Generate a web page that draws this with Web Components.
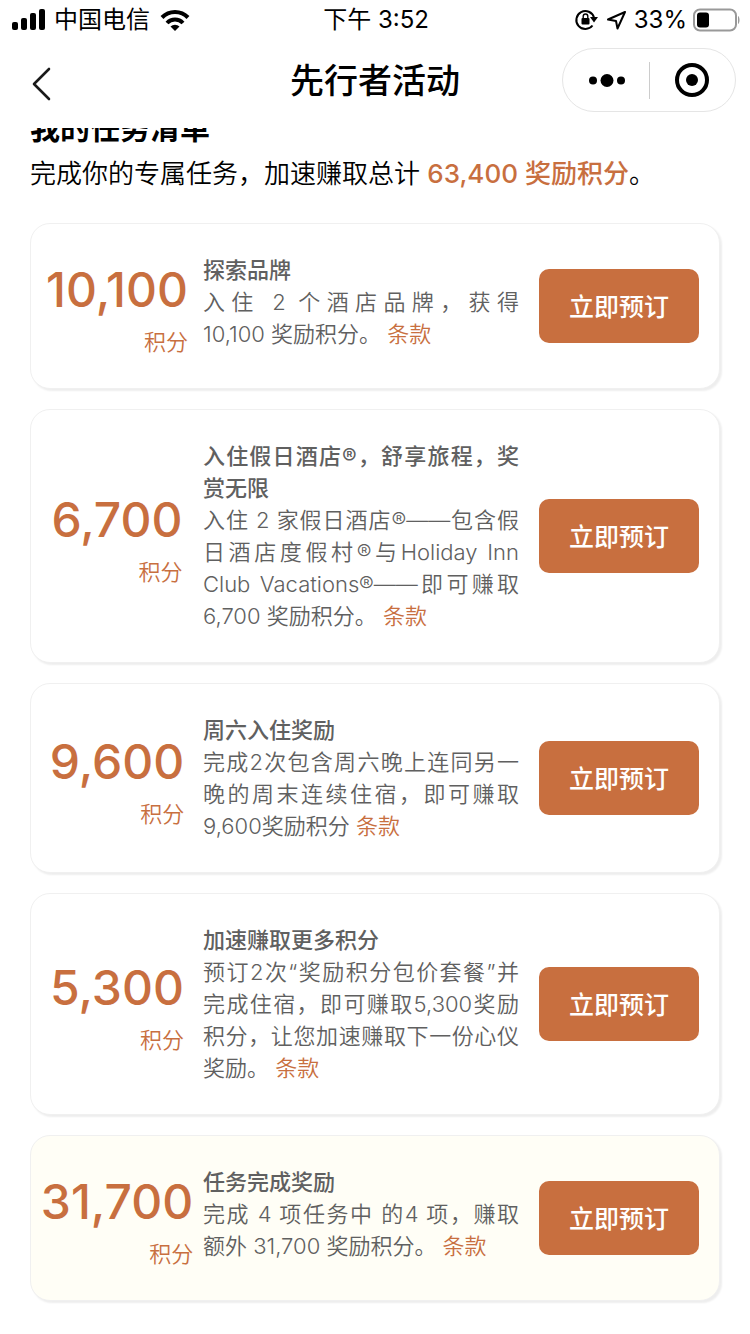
<!DOCTYPE html>
<html lang="zh-CN">
<head>
<meta charset="utf-8">
<meta name="viewport" content="width=device-width, initial-scale=1">
<title>先行者活动</title>
<style>
    :root {
        --accent: #c86f3f;
        --text: #606060;
    }

    body {
        margin: 0;
        background: #fff;
        color: #000;
        font-family: Inter, "Noto Sans CJK SC", sans-serif;
    }
</style>
</head>
<body>
<status-bar carrier="中国电信" time="下午 3:52" battery="33"></status-bar>
<nav-bar>先行者活动</nav-bar>
<task-list>
    <span slot="title">我的任务清单</span>
    <span slot="intro">完成你的专属任务，加速赚取总计 <mark-points>63,400 奖励积分</mark-points>。</span>
    <task-card points="10,100"><span slot="title">探索品牌</span>入住 2 个酒店品牌，获得 10,100&nbsp;奖励积分。 <a href="#terms">条款</a></task-card>
    <task-card points="6,700"><span slot="title">入住假日酒店®，舒享旅程，奖赏无限</span>入住 2 家假日酒店®——包含假日酒店度假村®与Holiday Inn Club Vacations®——即可赚取 6,700 奖励积分。 <a href="#terms">条款</a></task-card>
    <task-card points="9,600"><span slot="title">周六入住奖励</span>完成2次包含周六晚上连同另一晚的周末连续住宿，即可赚取9,600奖励积分 <a href="#terms">条款</a></task-card>
    <task-card points="5,300"><span slot="title">加速赚取更多积分</span>预订2次“奖励积分包价套餐”并完成住宿，即可赚取5,300奖励积分，让您加速赚取下一份心仪奖励。 <a href="#terms">条款</a></task-card>
    <task-card points="31,700" highlight><span slot="title">任务完成奖励</span>完成 4 项任务中 的4 项，赚取额外 31,700 奖励积分。 <a href="#terms">条款</a></task-card>
</task-list>

<script>
class StatusBar extends HTMLElement {
    constructor() {
        super();
        this.attachShadow({ mode: "open" });
    }

    connectedCallback() {
        const battery = this.getAttribute("battery");
        this.shadowRoot.innerHTML = `
            <style>
                :host {
                    display: grid;
                    grid-template-columns: 1fr auto 1fr;
                    align-items: center;
                    height: 40px;
                    padding: 0 10px 0 12px;
                    font-size: 24px;
                    line-height: 40px;
                }

                div {
                    display: flex;
                    align-items: center;
                    gap: 8px;
                }

                .right {
                    justify-content: flex-end;
                    gap: 5px;
                }

                svg {
                    flex: none;
                }
            </style>

            <div>
                <svg width="34" height="22" viewBox="0 0 34 22">
                    <rect x="0" y="13" width="6" height="8" rx="2"/>
                    <rect x="9" y="9" width="6" height="12" rx="2"/>
                    <rect x="18" y="4" width="6" height="17" rx="2"/>
                    <rect x="27" y="0" width="6" height="21" rx="2"/>
                </svg>
                <span>${this.getAttribute("carrier")}</span>
                <svg width="34" height="24" viewBox="0 0 34 24">
                    <path d="M4 9.500a18 18 0 0 1 26 0M9 15a11 11 0 0 1 16 0" fill="none" stroke="#000" stroke-width="4"/>
                    <path d="M17 23l-4.500-4.500a6.500 6.500 0 0 1 9 0z"/>
                </svg>
            </div>
            <span>${this.getAttribute("time")}</span>
            <div class="right">
                <svg width="26" height="24" viewBox="0 0 26 24">
                    <path d="M18.500 17.500a9 9 0 1 1 1.500-8" fill="none" stroke="#000" stroke-width="2"/>
                    <path d="M16 9h8l-4 5.500z"/>
                    <rect x="7.500" y="10" width="8" height="6.500" rx="1"/>
                    <path d="M9.200 10V8.300a2.300 2.300 0 0 1 4.600 0V10" fill="none" stroke="#000" stroke-width="1.400"/>
                </svg>
                <svg width="24" height="22" viewBox="0 0 24 22" fill="none" stroke="#000" stroke-width="2" stroke-linejoin="round">
                    <path d="M20 3L3 10.500l8 1.500 1.500 7.500z"/>
                </svg>
                <span>${battery}%</span>
                <svg width="48" height="24" viewBox="0 0 48 24">
                    <rect x="2" y="1.500" width="42" height="21" rx="6" fill="none" stroke="#999" stroke-width="2"/>
                    <rect x="5" y="4.500" width="${Math.round(36 * battery / 100)}" height="15" rx="3"/>
                    <path d="M46 8v8c2-1 2-7 0-8z" fill="#999"/>
                </svg>
            </div>
        `;
    }
}

class NavBar extends HTMLElement {
    constructor() {
        super();
        this.attachShadow({ mode: "open" });
        this.shadowRoot.innerHTML = `
            <style>
                :host {
                    display: grid;
                    grid-template-columns: 1fr auto 1fr;
                    align-items: center;
                    height: 80px;
                    padding: 0 14px 8px;
                    box-sizing: content-box;
                }

                h1 {
                    margin: 0;
                    padding-top: 2px;
                    font-size: 34px;
                    font-weight: 500;
                    line-height: 48px;
                }

                button {
                    display: flex;
                    align-items: center;
                    justify-content: center;
                    padding: 0;
                    border: none;
                    background: none;
                    cursor: pointer;
                }

                .back {
                    width: 54px;
                    height: 64px;
                    padding-top: 8px;
                }

                .capsule {
                    display: flex;
                    align-items: center;
                    justify-self: end;
                    width: 172px;
                    height: 62px;
                    border: 1px solid #e5e5e5;
                    border-radius: 32px;
                }

                .capsule button {
                    flex: 1;
                    height: 62px;
                }

                .capsule i {
                    width: 1px;
                    height: 37px;
                    background: #ccc;
                }
            </style>

            <button class="back" aria-label="返回">
                <svg width="20" height="34" viewBox="0 0 20 34" fill="none" stroke="#1a1a1a" stroke-width="2.600" stroke-linecap="round" stroke-linejoin="round">
                    <path d="M18 2L3 17l15 15"/>
                </svg>
            </button>
            <h1><slot></slot></h1>
            <div class="capsule">
                <button aria-label="更多">
                    <svg width="38" height="14" viewBox="0 0 38 14">
                        <circle cx="6" cy="7.500" r="4"/>
                        <circle cx="20" cy="7.500" r="6.500"/>
                        <circle cx="34" cy="7.500" r="4"/>
                    </svg>
                </button>
                <i></i>
                <button aria-label="关闭">
                    <svg width="36" height="36" viewBox="0 0 36 36">
                        <circle cx="18" cy="18" r="15" fill="none" stroke="#000" stroke-width="4"/>
                        <circle cx="18" cy="18" r="6"/>
                    </svg>
                </button>
            </div>
        `;
    }
}

class TaskList extends HTMLElement {
    constructor() {
        super();
        this.attachShadow({ mode: "open" });
        // the list is scrolled a little, so its title slides under the nav bar
        this.shadowRoot.innerHTML = `
            <style>
                :host {
                    display: block;
                    overflow: hidden;
                    padding: 0 30px 32px;
                }

                h2 {
                    margin: -20px 0 8px;
                    font-size: 30px;
                    font-weight: 700;
                    line-height: 40px;
                }

                p {
                    margin: 0 0 31px;
                    font-size: 26px;
                    font-weight: 350;
                    line-height: 36px;
                }

                .cards {
                    display: flex;
                    flex-direction: column;
                    gap: 20px;
                }
            </style>

            <h2><slot name="title"></slot></h2>
            <p><slot name="intro"></slot></p>
            <div class="cards"><slot></slot></div>
        `;
    }
}

class MarkPoints extends HTMLElement {
    constructor() {
        super();
        this.attachShadow({ mode: "open" });
        this.shadowRoot.innerHTML = `<style>
                :host {
                    color: var(--accent);
                    font-weight: 500;
                }
            </style><slot></slot>`;
    }
}

class TaskCard extends HTMLElement {
    constructor() {
        super();
        this.attachShadow({ mode: "open" });
    }

    connectedCallback() {
        this.shadowRoot.innerHTML = `
            <style>
                :host {
                    display: flex;
                    align-items: center;
                    padding: 30px 20px 30px 0;
                    border: 1px solid #f0f0f0;
                    border-radius: 20px;
                    background: #fff;
                    box-shadow: 2px 2px 2px #eee;
                    font-size: 22px;
                    line-height: 32px;
                }

                :host([highlight]) {
                    background: #fffef6;
                }

                .points {
                    flex: none;
                    display: flex;
                    justify-content: center;
                    width: 172px;
                    color: var(--accent);
                    font-weight: 350;
                    text-align: right;
                }

                strong {
                    display: block;
                    font-size: 48px;
                    font-weight: 500;
                    line-height: 72px;
                }

                .info {
                    flex: 1;
                    align-self: flex-start;
                    color: var(--text);
                    text-align: justify;
                }

                h3, p {
                    margin: 0;
                    font-size: 22px;
                    font-weight: 350;
                }

                h3 {
                    font-weight: 500;
                }

                ::slotted(a) {
                    color: var(--accent);
                    text-decoration: none;
                }

                button {
                    flex: none;
                    width: 160px;
                    height: 74px;
                    margin-left: 20px;
                    padding: 0 0 2px;
                    border: none;
                    border-radius: 10px;
                    background: var(--accent);
                    color: #fff;
                    font-family: inherit;
                    font-size: 25px;
                    font-weight: 500;
                    cursor: pointer;
                }
            </style>

            <div class="points">
                <div><strong>${this.getAttribute("points")}</strong>积分</div>
            </div>
            <div class="info">
                <h3><slot name="title"></slot></h3>
                <p><slot></slot></p>
            </div>
            <button>立即预订</button>
        `;
    }
}

customElements.define("status-bar", StatusBar);
customElements.define("nav-bar", NavBar);
customElements.define("task-list", TaskList);
customElements.define("mark-points", MarkPoints);
customElements.define("task-card", TaskCard);
</script>
</body>
</html>
